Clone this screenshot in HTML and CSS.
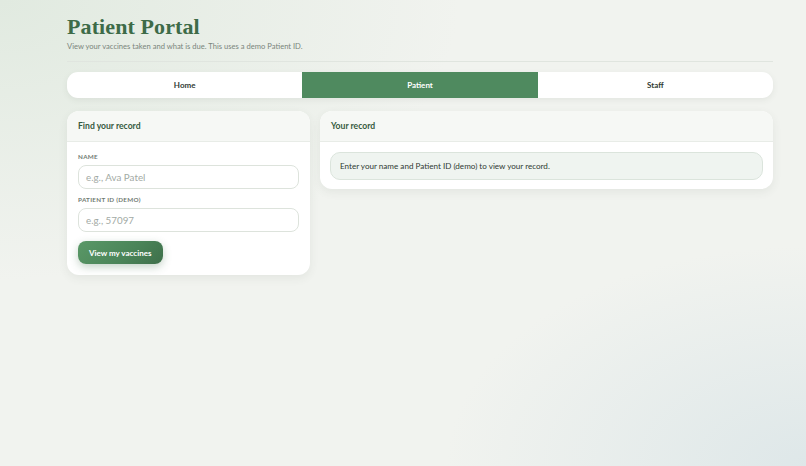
FILE: index.html
```html
<!DOCTYPE html>
<html lang="en">
<head>
<meta charset="utf-8">
<title>Patient Portal</title>
<link rel="stylesheet" href="styles.css">
</head>
<body>
<div class="page">
  <header class="head">
    <h1 class="title">Patient Portal</h1>
    <p class="subtitle">View your vaccines taken and what is due. This uses a demo Patient ID.</p>
  </header>
  <nav class="tabs">
    <a class="tab">Home</a>
    <a class="tab active">Patient</a>
    <a class="tab">Staff</a>
  </nav>
  <main class="grid">
    <section class="card">
      <div class="card-head">Find your record</div>
      <div class="card-body">
        <label class="label">Name</label>
        <input class="input" type="text" placeholder="e.g., Ava Patel">
        <label class="label">Patient ID (demo)</label>
        <input class="input" type="text" placeholder="e.g., 57097">
        <button class="btn">View my vaccines</button>
      </div>
    </section>
    <section class="card card-right">
      <div class="card-head">Your record</div>
      <div class="card-body">
        <div class="notice">Enter your name and Patient ID (demo) to view your record.</div>
      </div>
    </section>
  </main>
</div>
</body>
</html>
```
FILE: styles.css
```css
* { box-sizing: border-box; }
html, body { height: 100%; }
body {
  margin: 0;
  font-family: "Lato", "Noto Sans", sans-serif;
  color: #2c3a30;
  background:
    radial-gradient(ellipse 460px 280px at 0% 0%, rgba(214, 228, 214, 0.6), rgba(214,228,214,0) 100%),
    radial-gradient(ellipse 360px 220px at 100% 100%, rgba(220, 230, 232, 0.9), rgba(220,230,232,0) 100%),
    #f1f3ef;
}
.page {
  margin: 0 33px 0 67px;
  padding-top: 13px;
}
.head {
  padding-bottom: 10px;
  border-bottom: 1px solid #e0e5df;
}
.title {
  margin: 0;
  font-family: "Liberation Serif", serif;
  font-weight: 700;
  font-size: 22px;
  line-height: 27px;
  color: #3d6b48;
  letter-spacing: 0.1px;
}
.subtitle {
  margin: 1px 0 0;
  font-size: 7.6px;
  color: #7a857c;
}
.tabs {
  margin-top: 10px;
  display: grid;
  grid-template-columns: 1fr 1fr 1fr;
  background: #fff;
  border-radius: 11px;
  overflow: hidden;
  height: 26px;
  box-shadow: 0 2px 6px rgba(60, 80, 60, 0.08);
}
.tab {
  display: flex;
  align-items: center;
  justify-content: center;
  font-size: 8px;
  font-weight: 700;
  color: #2f3a33;
}
.tab.active {
  background: #4f8a5f;
  color: #fff;
}
.grid {
  margin-top: 13px;
  display: grid;
  grid-template-columns: 243fr 453fr;
  gap: 10px;
  align-items: start;
}
.card {
  background: #fff;
  border-radius: 12px;
  overflow: hidden;
  box-shadow: 0 3px 10px rgba(60, 80, 60, 0.08);
}
.card-head {
  height: 31px;
  display: flex;
  align-items: center;
  padding: 0 11px;
  background: #f6f8f5;
  border-bottom: 1px solid #e8ece7;
  font-size: 8.6px;
  font-weight: 700;
  color: #355a40;
}
.card-body {
  padding: 10px 11px 11px;
  display: flex;
  flex-direction: column;
  align-items: stretch;
}
.label {
  font-size: 6.3px;
  font-weight: 700;
  letter-spacing: 0.3px;
  text-transform: uppercase;
  color: #6f7a72;
  line-height: 10px;
}
.input {
  margin-top: 3px;
  margin-bottom: 6px;
  height: 24px;
  border: 1px solid #dde3dc;
  border-radius: 8px;
  padding: 0 7px;
  font-family: inherit;
  font-size: 9.8px;
  color: #333;
  background: #fff;
  outline: none;
}
.input::placeholder { color: #a2aaa4; }
.btn {
  margin-top: 3px;
  align-self: flex-start;
  height: 23px;
  padding: 0 11px;
  border: none;
  border-radius: 8px;
  font-family: inherit;
  font-size: 8px;
  font-weight: 700;
  color: #fff;
  background: linear-gradient(135deg, #5a9867 0%, #4a8458 60%, #3e6f4a 100%);
  box-shadow: 0 3px 8px rgba(60, 110, 70, 0.3);
}
.card-right .card-body { padding: 10px 10px 9px; }
.notice {
  height: 28px;
  display: flex;
  align-items: center;
  padding: 0 9px;
  background: #eff4f0;
  border: 1px solid #dbe4dc;
  border-radius: 10px;
  font-size: 8.1px;
  color: #2f3a33;
}
```
